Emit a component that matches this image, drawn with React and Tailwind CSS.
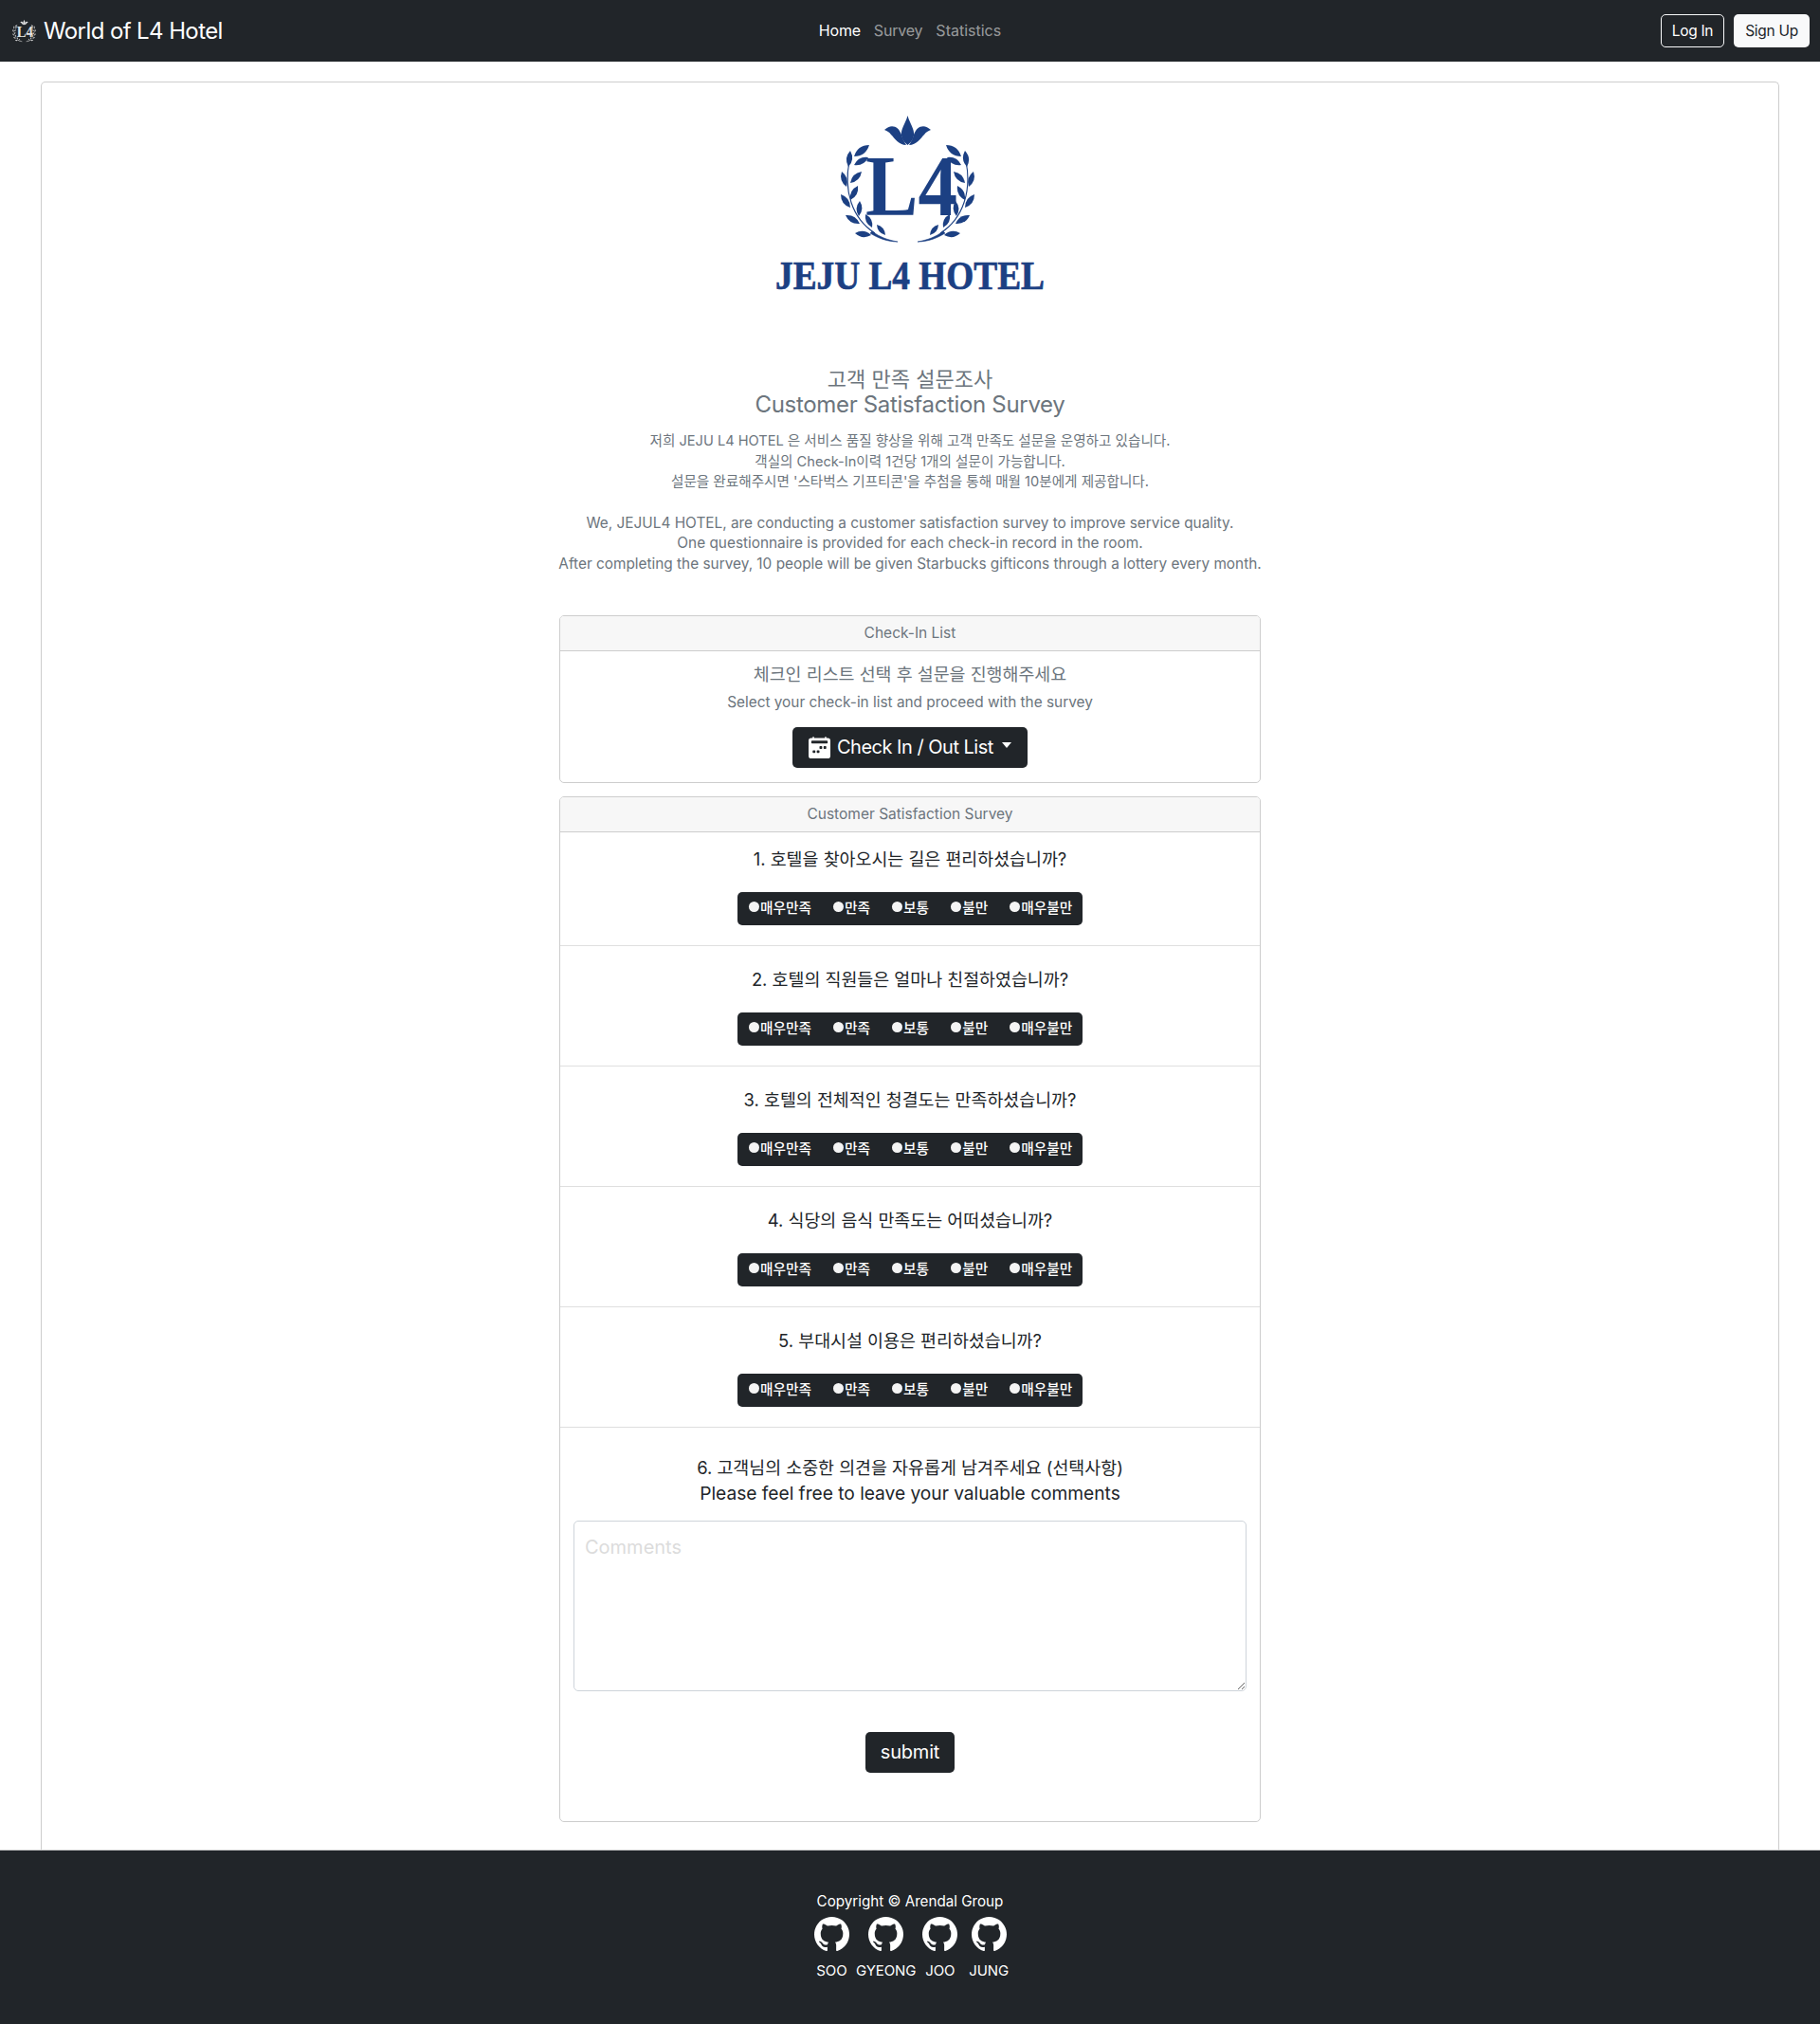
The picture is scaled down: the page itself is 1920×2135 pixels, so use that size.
import { useState } from 'react'
import { BsCalendar2WeekFill } from 'react-icons/bs'

const FONT = "font-['Inter','Noto_Sans_CJK_KR',sans-serif]"

const questions = [
  '1. 호텔을 찾아오시는 길은 편리하셨습니까?',
  '2. 호텔의 직원들은 얼마나 친절하였습니까?',
  '3. 호텔의 전체적인 청결도는 만족하셨습니까?',
  '4. 식당의 음식 만족도는 어떠셨습니까?',
  '5. 부대시설 이용은 편리하셨습니까?',
]

const options = ['매우만족', '만족', '보통', '불만', '매우불만']

const GITHUB_PATH =
  'M8 0C3.58 0 0 3.58 0 8c0 3.54 2.29 6.53 5.47 7.59.4.07.55-.17.55-.38 0-.19-.01-.82-.01-1.49-2.01.37-2.53-.49-2.69-.94-.09-.23-.48-.94-.82-1.13-.28-.15-.68-.52-.01-.53.63-.01 1.08.58 1.23.82.72 1.21 1.87.87 2.33.66.07-.52.28-.87.51-1.07-1.78-.2-3.64-.89-3.64-3.95 0-.87.31-1.59.82-2.15-.08-.2-.36-1.02.08-2.12 0 0 .67-.21 2.2.82.64-.18 1.32-.27 2-.27.68 0 1.36.09 2 .27 1.53-1.04 2.2-.82 2.2-.82.44 1.1.16 1.92.08 2.12.51.56.82 1.27.82 2.15 0 3.07-1.87 3.75-3.65 3.95.29.25.54.73.54 1.48 0 1.07-.01 1.93-.01 2.2 0 .21.15.46.55.38A8.012 8.012 0 0 0 16 8c0-4.42-3.58-8-8-8z'

// leaf tips of the left branch, in logo coordinates
const leaves = [
  [137, 53, 121, 65],
  [117, 59, 115, 76],
  [136, 66, 121, 74],
  [108, 81, 113, 97],
  [129, 81, 117, 93],
  [125, 96, 117, 111],
  [107, 105, 117, 119],
  [127, 112, 126, 128],
  [112, 127, 127, 136],
  [133, 126, 140, 140],
  [122, 146, 139, 148],
  [145, 137, 154, 148],
]

const leafPath = ([x1, y1, x2, y2]) => {
  const mx = (x1 + x2) / 2
  const my = (y1 + y2) / 2
  const nx = -(y2 - y1) * 0.36
  const ny = (x2 - x1) * 0.36
  return `M${x1} ${y1} Q${mx + nx} ${my + ny} ${x2} ${y2} Q${mx - nx} ${my - ny} ${x1} ${y1} Z`
}

const Branch = ({ color, flip }) => (
  <g transform={flip ? 'translate(355 0) scale(-1 1)' : undefined}>
    <path d="M116 70 C 110 100, 118 130, 143 146" fill="none" stroke={color} strokeWidth="1.1" />
    <path d="M140 144 C 148 150, 156 153, 167 155 C 156 155, 146 151, 138 146 Z" fill={color} stroke={color} strokeWidth="0.6" />
    {leaves.map((leaf) => (
      <path key={leaf.join('-')} d={leafPath(leaf)} fill={color} />
    ))}
  </g>
)

const Emblem = ({ color }) => (
  <>
    <g fill={color}>
      <path d="M177.5 22 C 180 31, 185 36, 184 43 C 183 48, 180 51, 177.5 53 C 175 51, 172 48, 171 43 C 170 36, 175 31, 177.5 22 Z" />
      <path d="M153 37 C 160 30, 168 33, 171 42 C 172 46, 174 50, 176 53 C 168 53, 164 46, 160 42 C 158 39, 155 38, 153 37 Z" />
      <path d="M202 37 C 195 30, 187 33, 184 42 C 183 46, 181 50, 179 53 C 187 53, 191 46, 195 42 C 197 39, 200 38, 202 37 Z" />
    </g>
    <Branch color={color} />
    <Branch color={color} flip />
    <text
      x="133"
      y="127"
      textLength="97"
      lengthAdjust="spacingAndGlyphs"
      fontFamily="'Liberation Serif', serif"
      fontWeight="700"
      fontSize="91"
      fill={color}
    >
      L4
    </text>
  </>
)

const Logo = () => (
  <svg width="360" height="240" viewBox="0 0 360 240" className="block">
    <Emblem color="#1c4083" />
    <text
      x="38"
      y="205"
      textLength="284"
      lengthAdjust="spacingAndGlyphs"
      fontFamily="'Liberation Serif', serif"
      fontWeight="700"
      fontSize="42"
      stroke="#1c4083"
      strokeWidth="0.7"
      fill="#1c4083"
    >
      JEJU L4 HOTEL
    </text>
  </svg>
)

const CardHeader = ({ children }) => (
  <div className="h-[37px] border-b border-[#cdcdcd] bg-[#f7f7f7] text-center text-[15.5px] leading-[36px] text-[#6c757d]">
    {children}
  </div>
)

const Question = ({ text, name, first }) => {
  const [picked, setPicked] = useState(null)

  return (
    <div className={`border-b border-[#dfdfdf] pb-[21px] text-center ${first ? 'pt-[17px]' : 'pt-[24px]'}`}>
      <p className="text-[18.4px] leading-[23px] text-[#212529]">{text}</p>
      <div className="mt-[23px] flex justify-center">
        <div className="flex h-[35px] w-[364px] items-center gap-[23px] rounded-[5px] bg-[#212529] pl-[12px] text-[14.7px] font-medium text-white">
          {options.map((option) => (
            <label key={option} className="flex items-center">
              <input
                type="radio"
                name={name}
                checked={picked === option}
                onChange={() => setPicked(option)}
                className="mb-[4px] h-[11px] w-[11px] appearance-none rounded-full bg-[#f4f4f4]"
              />
              <span className="ml-[1px]">{option}</span>
            </label>
          ))}
        </div>
      </div>
    </div>
  )
}

const Member = ({ name, className = '' }) => (
  <a className={`flex flex-col items-center ${className}`}>
    <svg width="37" height="37" viewBox="0 0 16 16" fill="#fff">
      <path d={GITHUB_PATH} />
    </svg>
    <span className="mt-[8px] leading-[24px]">{name}</span>
  </a>
)

export default function App() {
  return (
    <div className={`${FONT} bg-white`}>
      <nav className="flex h-[65px] items-center justify-between bg-[#212529] px-[11px]">
        <a className="flex w-[400px] items-center gap-[7px] pl-[1px] text-[24px] tracking-[-0.6px] text-white">
          <svg width="27" height="25" viewBox="100 18 155 142" className="shrink-0">
            <Emblem color="#e4e4e4" />
          </svg>
          World of L4 Hotel
        </a>
        <div className="flex gap-[14px] pb-[1px] text-[16px] tracking-[-0.2px]">
          <a className="text-white">Home</a>
          <a className="text-[#ffffff8c]">Survey</a>
          <a className="tracking-normal text-[#ffffff8c]">Statistics</a>
        </div>
        <div className="flex w-[400px] justify-end gap-[10px] text-[15.5px] tracking-[-0.3px]">
          <button className="h-[35px] w-[67px] rounded-[5px] border border-[#f8f9fa] text-white">Log In</button>
          <button className="h-[35px] w-[80px] rounded-[5px] bg-[#f8f9fa] text-[#212529]">Sign Up</button>
        </div>
      </nav>

      <main className="mx-[43px] mt-[21px] h-[1865px] rounded-t-[5px] border border-b-0 border-[#cdcdcd] pt-[13px]">
        <div className="flex justify-center">
          <Logo />
        </div>

        <div className="mt-[48px] text-center text-[#6c757d]">
          <h4 className="text-[22px] leading-[25px]">고객 만족 설문조사</h4>
          <h4 className="text-[24px] leading-[27px] tracking-[-0.33px]">Customer Satisfaction Survey</h4>
          <p className="mt-[15px] text-[14.6px] leading-[21.67px]">
            저희 JEJU L4 HOTEL 은 서비스 품질 향상을 위해 고객 만족도 설문을 운영하고 있습니다.
            <br />
            객실의 Check-In이력 1건당 1개의 설문이 가능합니다.
            <br />
            설문을 완료해주시면 '스타벅스 기프티콘'을 추첨을 통해 매월 10분에게 제공합니다.
          </p>
          <p className="mt-[20.67px] text-[15.36px] leading-[21.67px]">
            We, JEJUL4 HOTEL, are conducting a customer satisfaction survey to improve service quality.
            <br />
            One questionnaire is provided for each check-in record in the room.
            <br />
            After completing the survey, 10 people will be given Starbucks gifticons through a lottery every month.
          </p>
        </div>

        <section className="mx-auto mt-[43px] h-[177px] w-[740px] overflow-hidden rounded-[5px] border border-[#cdcdcd] text-center">
          <CardHeader>Check-In List</CardHeader>
          <p className="mt-[13px] text-[18.4px] leading-[23px] text-[#6c757d]">체크인 리스트 선택 후 설문을 진행해주세요</p>
          <p className="mt-[7px] text-[15.36px] leading-[21px] text-[#6c757d]">Select your check-in list and proceed with the survey</p>
          <button className="mt-[16px] inline-flex h-[43px] w-[248px] items-center rounded-[5px] bg-[#212529] pl-[17px] text-[20px] tracking-[-0.5px] text-white">
            <BsCalendar2WeekFill size={23} className="mr-[7px] shrink-0" />
            Check In / Out List
            <span className="mb-[4px] ml-[9px] h-0 w-0 border-x-[5.5px] border-t-[6px] border-x-transparent border-t-white" />
          </button>
        </section>

        <section className="mx-auto mt-[14px] h-[1082px] w-[740px] overflow-hidden rounded-[5px] border border-[#cdcdcd] text-center">
          <CardHeader>Customer Satisfaction Survey</CardHeader>
          {questions.map((text, index) => (
            <Question key={text} text={text} name={`q${index + 1}`} first={index === 0} />
          ))}
          <div className="px-[14px] pt-[29px]">
            <p className="text-[18.4px] leading-[27px] text-[#212529]">6. 고객님의 소중한 의견을 자유롭게 남겨주세요 (선택사항)</p>
            <p className="text-[19.2px] leading-[27px] tracking-[-0.03px] text-[#212529]">Please feel free to leave your valuable comments</p>
            <textarea
              placeholder="Comments"
              className="mt-[15px] block h-[180px] w-full rounded-[5px] border border-[#ced4da] px-[11px] py-[14px] text-[20px] leading-[27px] outline-none placeholder:text-[#dcdcdc]"
            />
            <button className="mt-[43px] h-[43px] w-[94px] rounded-[5px] bg-[#212529] text-[20px] tracking-[-0.2px] text-white">submit</button>
          </div>
        </section>
      </main>

      <footer className="h-[184px] border-t border-[#cdcdcd] bg-[#212529] pt-[42px] text-center text-white">
        <p className="text-[15.2px] leading-[24px]">Copyright © Arendal Group</p>
        <div className="mt-[4px] flex justify-center gap-[7px] pl-[3px] text-[15px] tracking-[-0.1px]">
          <Member name="SOO" />
          <Member name="GYEONG" />
          <Member name="JOO" />
          <Member name="JUNG" className="ml-[5px]" />
        </div>
      </footer>
    </div>
  )
}
